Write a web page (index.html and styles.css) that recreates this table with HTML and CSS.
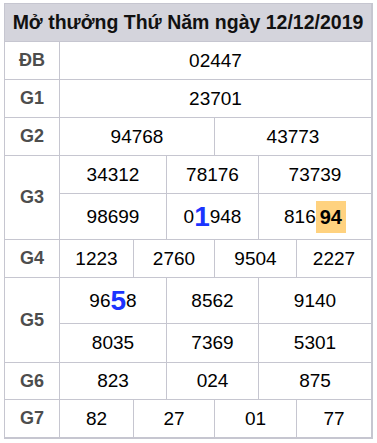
FILE: index.html
```html
<!DOCTYPE html>
<html lang="vi">
<head>
<meta charset="utf-8">
<link rel="stylesheet" href="styles.css">
</head>
<body>
<div class="board">
  <div class="cell head span7">Mở thưởng Thứ Năm ngày 12/12/2019</div>

  <div class="cell label">ĐB</div>
  <div class="cell span6">02447</div>

  <div class="cell label">G1</div>
  <div class="cell span6">23701</div>

  <div class="cell label">G2</div>
  <div class="cell span3">94768</div>
  <div class="cell span3">43773</div>

  <div class="cell label rows2">G3</div>
  <div class="cell span2">34312</div>
  <div class="cell span2">78176</div>
  <div class="cell span2">73739</div>
  <div class="cell span2">98699</div>
  <div class="cell span2">0<b class="big">1</b>948</div>
  <div class="cell span2">816<b class="hl">94</b></div>

  <div class="cell label">G4</div>
  <div class="cell">1223</div>
  <div class="cell span2">2760</div>
  <div class="cell span2">9504</div>
  <div class="cell">2227</div>

  <div class="cell label rows2">G5</div>
  <div class="cell span2">96<b class="big">5</b>8</div>
  <div class="cell span2">8562</div>
  <div class="cell span2">9140</div>
  <div class="cell span2">8035</div>
  <div class="cell span2">7369</div>
  <div class="cell span2">5301</div>

  <div class="cell label">G6</div>
  <div class="cell span2">823</div>
  <div class="cell span2">024</div>
  <div class="cell span2">875</div>

  <div class="cell label">G7</div>
  <div class="cell">82</div>
  <div class="cell span2">27</div>
  <div class="cell span2">01</div>
  <div class="cell">77</div>
</div>
</body>
</html>
```
FILE: styles.css
```css
html, body {
  margin: 0;
  padding: 0;
  background: #fff;
}
body {
  padding: 3px 0 0 4px;
  font-family: "Liberation Sans", Arial, sans-serif;
}
.board {
  display: grid;
  width: max-content;
  grid-template-columns: 54px 73px 32px 47px 43px 37px 74px;
  grid-template-rows: 37px 37px 37px 37px 37px 45px 37px 45px 38px 36px 37px;
  gap: 1px;
  padding: 1px 2px 2px 1px;
  background: #c6c6d0;
}
.cell {
  background: #fff;
  display: flex;
  align-items: center;
  justify-content: center;
  font-size: 19px;
  color: #000;
  white-space: nowrap;
}
.head {
  background: #d4d4dc;
  font-weight: bold;
  font-size: 19.5px;
  color: #111;
}
.label {
  font-weight: bold;
  font-size: 18px;
  color: #4d4d4d;
}
.span7 { grid-column: span 7; }
.span6 { grid-column: span 6; }
.span3 { grid-column: span 3; }
.span2 { grid-column: span 2; }
.rows2 { grid-row: span 2; }
.big {
  color: #1c34ff;
  font-size: 28px;
  font-weight: bold;
  line-height: 1;
}
.hl {
  background: #ffd27f;
  font-weight: bold;
  padding: 6px 4px 5px 4px;
  line-height: 21px;
  font-size: 20px;
}
```
